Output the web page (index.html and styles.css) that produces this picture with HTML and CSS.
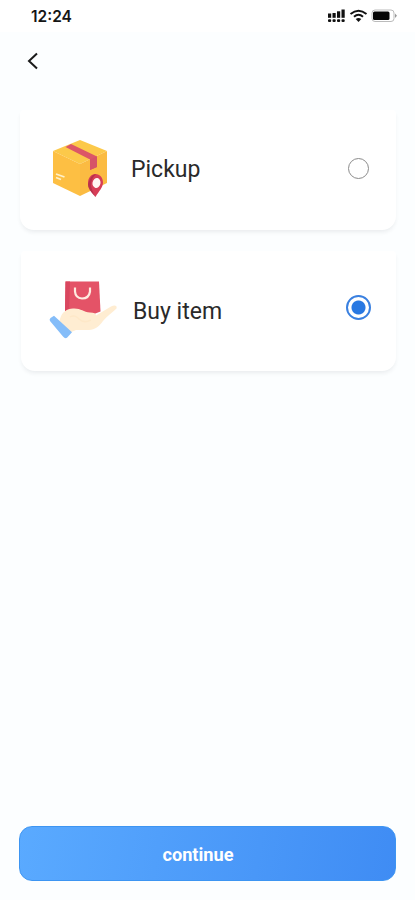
FILE: index.html
```html
<!DOCTYPE html>
<html lang="en">
<head>
<meta charset="UTF-8">
<meta name="viewport" content="width=device-width, initial-scale=1.0">
<title>Choose service</title>
<link rel="stylesheet" href="styles.css">
</head>
<body>
<div class="screen">
    <div class="status-bar">
        <span class="time">12:24</span>
        <svg class="status-icons" width="70" height="16" viewBox="0 0 70 16">
            <!-- signal -->
            <g fill="#111">
                <rect x="1" y="5.5" width="3.2" height="4.3"/>
                <rect x="5.5" y="5" width="3.2" height="4.8"/>
                <rect x="10" y="3.3" width="3.2" height="6.5"/>
                <rect x="14.5" y="1.5" width="3.2" height="8.3"/>
                <rect x="1" y="11.3" width="3.2" height="2.7" rx="1"/>
                <rect x="5.5" y="11.3" width="3.2" height="2.7" rx="1"/>
                <rect x="10" y="11.3" width="3.2" height="2.7" rx="1"/>
                <rect x="14.5" y="11.3" width="3.2" height="2.7" rx="1"/>
            </g>
            <!-- wifi -->
            <g fill="none" stroke="#111" stroke-width="2">
                <path d="M23.500 6Q31.500-.5 39.500 6"/>
                <path d="M27 8.800Q31.500 4.800 36 8.800"/>
            </g>
            <path d="M28.700 11Q31.500 8.800 34.300 11L31.500 14Z" fill="#111"/>
            <!-- battery -->
            <rect x="45" y="2" width="22" height="11.500" rx="3" fill="#fff" stroke="#bbb"/>
            <rect x="46" y="3.500" width="16.500" height="8.500" rx="1.500" fill="#050505"/>
            <path d="M68 5.500L70 7.800L68 10Z" fill="#999"/>
        </svg>
    </div>

    <div class="header">
        <svg width="12" height="18" viewBox="0 0 12 18" fill="none" stroke="#1a1a1a" stroke-width="2">
            <path d="M10 1.500L2 9L10 16.500"/>
        </svg>
    </div>

    <div class="options">
        <label class="option">
            <svg class="option-icon" width="70" height="62" viewBox="0 0 70 62">
                <path d="M4 13L31 2L58 13L31 26Z" fill="#fcc94a"/>
                <path d="M4 13L31 26V58L4 45Z" fill="#fdbf43"/>
                <path d="M58 13L31 26V58L58 45Z" fill="#fbbb42"/>
                <path d="M16.500 9L22 6L48 18.500V29L41 32V21.500Z" fill="#dc5767"/>
                <path d="M41 21.500L48 18.500V29L41 32Z" fill="#d65367"/>
                <path d="M7 36L15.500 39M7 39.500L12 41.500" stroke="#fff1c9" stroke-width="1.800"/>
                <path d="M46.500 59C43 53 39 50 39 45C39 40 42 36 46.500 36C51 36 54 40 54 44.500C54 49.500 50 53 46.500 59Z" fill="#d73d57"/>
                <path d="M40.500 42Q43 36 47 36Q42 41 42 47Q42 51 46.500 59Q38.500 51 39 46Z" fill="#b82f4b"/>
                <ellipse cx="47.500" cy="45" rx="4" ry="5" fill="#fff5f2" transform="rotate(12 47.500 45)"/>
            </svg>
            <span class="option-name">Pickup</span>
            <input type="radio" name="service" class="radio">
        </label>
        <label class="option buy">
            <svg class="option-icon" width="70" height="62" viewBox="0 0 70 62">
                <path d="M17.500 3.500H51L52.500 33.500L46 36H17Z" fill="#e45367"/>
                <path d="M17.500 3.500H22L21 34H17Z" fill="#d9475f"/>
                <path d="M27 9.500V13.500Q27.500 20 34 20.500Q41 20.500 42 13.500V9.500" fill="none" stroke="#ffece0" stroke-width="2.200"/>
                <path d="M12 41C14 33.500 19 31 25 30.500C33 30 35 34 42 34.500C46 34.500 48 35.500 48 37.500L63 28.500C66 27 69.500 27 68.500 30.500C65 34 59 38 55 43C51 48.500 47 52 41 52H28L21 55L11 45Z" fill="#ffedd2"/>
                <path d="M22 39C25 37 29 38 31 41C35 45 39 44 43 42" fill="none" stroke="#fee8c8" stroke-width="1.500"/>
                <path d="M2 43Q1 41.500 2.500 40L6 37.800L24 54.200L19 59.800Q17 61 15 58.500Z" fill="#85bdf9"/>
            </svg>
            <span class="option-name">Buy item</span>
            <input type="radio" name="service" class="radio" checked>
        </label>
    </div>

    <button class="continue">continue</button>
</div>
</body>
</html>
```

FILE: styles.css
```css
* {
    box-sizing: border-box;
}
body {
    margin: 0;
    font-family: Roboto, "Liberation Sans", sans-serif;
    background-color: #fcfeff;
}
.screen {
    display: flex;
    flex-direction: column;
    height: 900px;
    padding-bottom: 19px;
}
.status-bar {
    display: flex;
    justify-content: space-between;
    align-items: center;
    height: 32px;
    padding: 0 18px 0 31px;
    background-color: #fff;
}
.time {
    font-family: Inter, sans-serif;
    font-size: 15.5px;
    font-weight: 600;
    color: #151515;
}
.header {
    height: 78px;
    padding: 20px 27px;
}
.options {
    display: flex;
    flex-direction: column;
    gap: 21px;
    flex: 1;
    padding: 0 19px 0 20px;
}
.option {
    display: flex;
    align-items: center;
    height: 120px;
    padding: 0 27px 2px 29px;
    background-color: #fff;
    border-radius: 4px 4px 14px 14px;
    box-shadow: 0 3px 4px -1px rgba(40, 60, 65, 0.09);
}
.option.buy {
    margin-left: 1px;
    padding: 0 25.5px 4px 27px;
}
.option-name {
    flex: 1;
    margin-left: 12px;
    font-size: 23px;
    color: #2a2a2a;
}
.buy .option-name {
    margin: 5px 0 0 15px;
}
.radio {
    appearance: none;
    width: 21px;
    height: 21px;
    margin: 0 0 1px;
    border: 1.5px solid #8b8b8b;
    border-radius: 50%;
}
.radio:checked {
    width: 25px;
    height: 25px;
    margin-bottom: 3px;
    border: 2px solid #3a80e0;
    background: radial-gradient(circle, #2878e2 6.5px, #fff 7.5px);
}
.continue {
    height: 55px;
    margin: 0 19px;
    padding: 2px 19px 0 0;
    border: 1px solid #3d95f2;
    border-radius: 13px;
    background: linear-gradient(100deg, #5aaaff, #3f8cf4);
    color: #fff;
    font-family: inherit;
    font-size: 18.2px;
    font-weight: 700;
}
```
